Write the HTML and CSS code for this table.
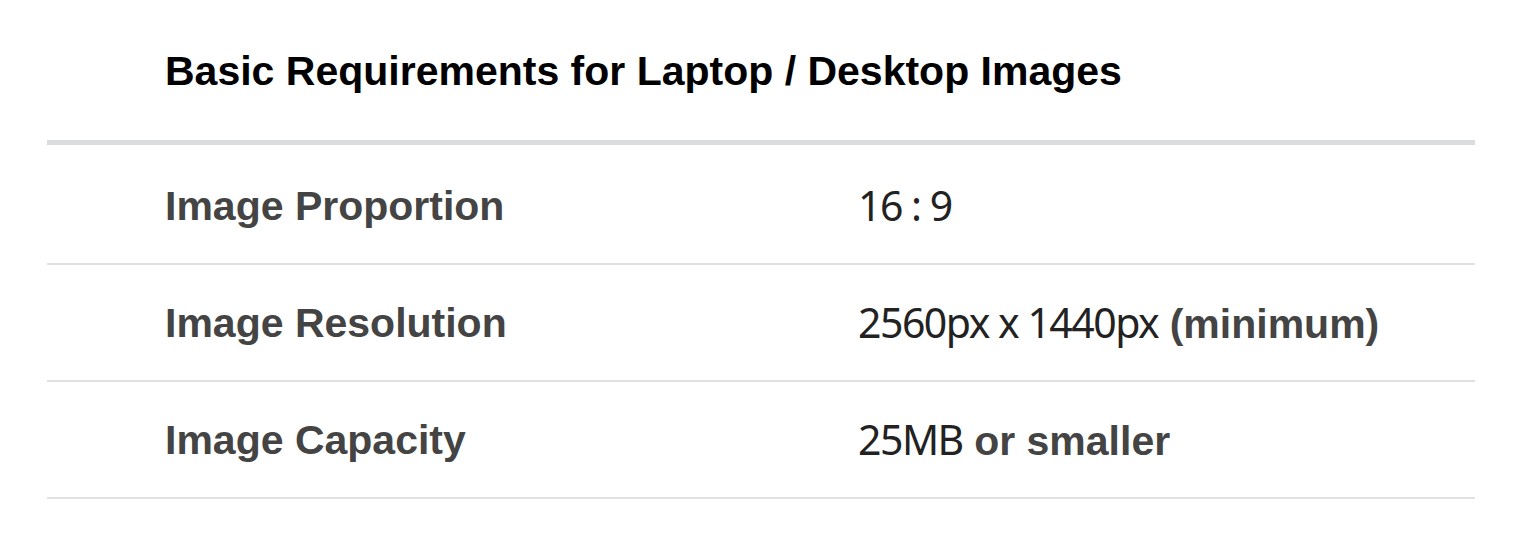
FILE: index.html
```html
<!DOCTYPE html>
<html lang="en">
<head>
<meta charset="utf-8">
<title>Basic Requirements</title>
<link rel="stylesheet" href="styles.css">
</head>
<body>
<section class="spec">
  <h2 class="spec-title">Basic Requirements for Laptop / Desktop Images</h2>
  <div class="spec-table">
    <div class="spec-row">
      <div class="spec-label">Image Proportion</div>
      <div class="spec-value"><span class="img-text">16 : 9</span></div>
    </div>
    <div class="spec-row">
      <div class="spec-label">Image Resolution</div>
      <div class="spec-value"><span class="img-text">2560px x 1440px</span> <span class="bold-text">(minimum)</span></div>
    </div>
    <div class="spec-row">
      <div class="spec-label">Image Capacity</div>
      <div class="spec-value"><span class="img-text">25MB</span> <span class="bold-text">or smaller</span></div>
    </div>
  </div>
</section>
</body>
</html>
```
FILE: styles.css
```css
html, body {
  margin: 0;
  padding: 0;
  background: #ffffff;
}
body {
  font-family: "Liberation Sans", Arial, sans-serif;
}
.spec {
  padding: 47px 55px 0 47px;
}
.spec-title {
  margin: 0;
  padding-left: 118px;
  font-size: 41px;
  font-weight: 700;
  color: #000;
  line-height: 48px;
  height: 93px;
}
.spec-table {
  border-top: 5px solid #dadcdd;
}
.spec-row {
  display: flex;
  align-items: center;
  height: 115px;
  border-bottom: 2px solid #e0e1e2;
}
.spec-row:first-child {
  height: 120px;
  padding-top: 4px;
  box-sizing: border-box;
}
.spec-label {
  width: 693px;
  padding-left: 118px;
  font-size: 41px;
  font-weight: 700;
  color: #444444;
  line-height: 48px;
}
.spec-value {
  font-size: 41px;
  color: #444444;
  white-space: nowrap;
  line-height: 48px;
}
.img-text {
  font-family: "Noto Sans", "Open Sans", sans-serif;
  font-weight: 400;
  color: #222222;
  letter-spacing: -1.5px;
  font-size: 41px;
}
.bold-text {
  font-weight: 700;
}
```
